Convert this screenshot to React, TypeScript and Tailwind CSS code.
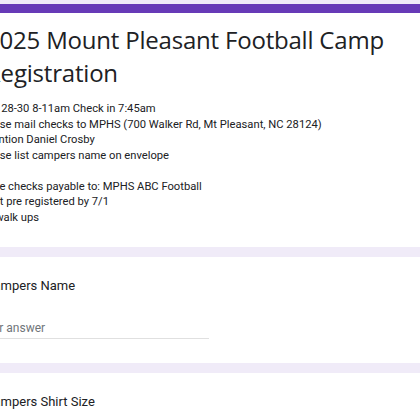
export default function App() {
  const lines = [
    "July 28-30 8-11am Check in 7:45am",
    "Please mail checks to MPHS (700 Walker Rd, Mt Pleasant, NC 28124)",
    "Attention Daniel Crosby",
    "Please list campers name on envelope",
    "",
    "Make checks payable to: MPHS ABC Football",
    "Must pre registered by 7/1",
    "No walk ups",
  ];

  return (
    <div className="w-[420px] h-[420px] overflow-hidden bg-[#f0ebf8]">
      <div className="-ml-[40px] w-[480px] pt-[4px] flex flex-col gap-[10px]">
        {/* Header card */}
        <div className="bg-white border-t-[9px] border-[#673ab7] pl-[26px] pt-[10px] pb-[22px]">
          <h1 className="text-[24px] leading-[33px] text-[#202124] font-['Open_Sans',sans-serif] tracking-[-0.2px]">
            2025 Mount Pleasant Football Camp Registration
          </h1>
          <div className="mt-[12px] -ml-[8px] text-[11.2px] leading-[15.5px] text-[#202124] font-['Roboto',sans-serif]">
            {lines.map((l, i) => (
              <div key={i} className="h-[15.5px] whitespace-nowrap">{l}</div>
            ))}
          </div>
        </div>

        {/* Question: name */}
        <div className="bg-white pl-[25px] pt-[19px] pb-[24px]">
          <div className="text-[13px] leading-[20px] text-[#202124] font-['Roboto',sans-serif]">
            Campers Name
          </div>
          <div className="mt-[24px] -ml-[6px] w-[230px] border-b border-[#e0e0e0] pb-[2px] text-[12px] leading-[16px] text-[#70757a] font-['Roboto',sans-serif]">
            Your answer
          </div>
        </div>

        {/* Question: shirt size */}
        <div className="bg-white pl-[25px] pt-[19px] pb-[40px]">
          <div className="text-[13px] leading-[20px] text-[#202124] font-['Roboto',sans-serif]">
            Campers Shirt Size
          </div>
        </div>
      </div>
    </div>
  );
}
